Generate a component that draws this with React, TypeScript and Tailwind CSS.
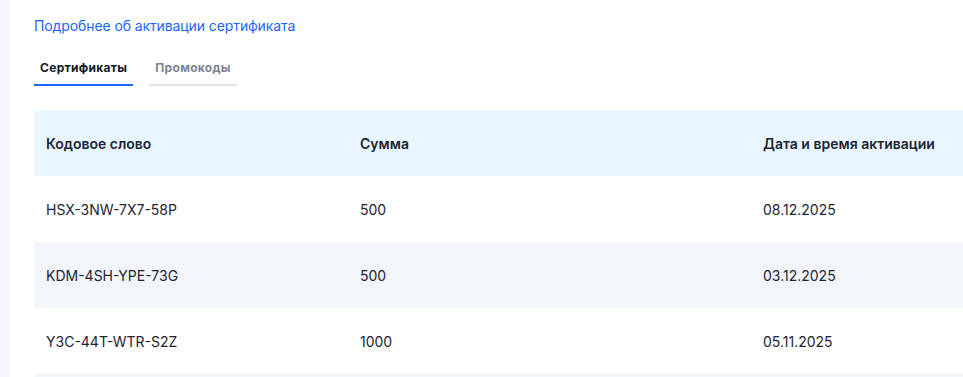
const rows = [
  { code: 'HSX-3NW-7X7-58P', sum: '500', date: '08.12.2025' },
  { code: 'KDM-4SH-YPE-73G', sum: '500', date: '03.12.2025' },
  { code: 'Y3C-44T-WTR-S2Z', sum: '1000', date: '05.11.2025' },
  { code: '', sum: '', date: '' },
]

export default function App() {
  return (
    <div
      className="flex h-[377px] w-[963px] overflow-hidden bg-[#f4f6f9]"
      style={{ fontFamily: 'Inter, "Noto Sans", sans-serif' }}
    >
      <div className="ml-[10px] w-[1200px] shrink-0 bg-white pl-6 pt-[13px]">
        {/* Link */}
        <a className="text-[14px] leading-5 tracking-[-0.1px] text-[#1a66ff]">Подробнее об активации сертификата</a>

        {/* Tabs */}
        <div className="mt-[23px] flex gap-4">
          <div className="border-b-2 border-[#1a66ff] px-[6px] pb-[8px] text-[12px] font-bold leading-4 tracking-[0.3px] text-[#111827]">
            Сертификаты
          </div>
          <div className="border-b-2 border-[#dfe3ec] px-[6px] pb-[8px] text-[12px] font-bold leading-4 tracking-[0.3px] text-[#7d8492]">
            Промокоды
          </div>
        </div>

        {/* Table */}
        <div className="mt-6 text-[14px] text-[#1c2433]">
          <div className="grid h-[66px] grid-cols-[314px_403px_1fr] items-center bg-[#eaf6ff] font-semibold">
            <div className="pl-3">Кодовое слово</div>
            <div className="pl-3">Сумма</div>
            <div className="pl-3">Дата и время активации</div>
          </div>
          {rows.map((r, i) => (
            <div
              key={i}
              className={`grid h-[66px] grid-cols-[314px_403px_1fr] items-center ${i % 2 === 1 ? 'bg-[#f2f5f9]' : 'bg-white'}`}
            >
              <div className="pl-3">{r.code}</div>
              <div className="pl-3">{r.sum}</div>
              <div className="pl-3">{r.date}</div>
            </div>
          ))}
        </div>
      </div>
    </div>
  )
}
